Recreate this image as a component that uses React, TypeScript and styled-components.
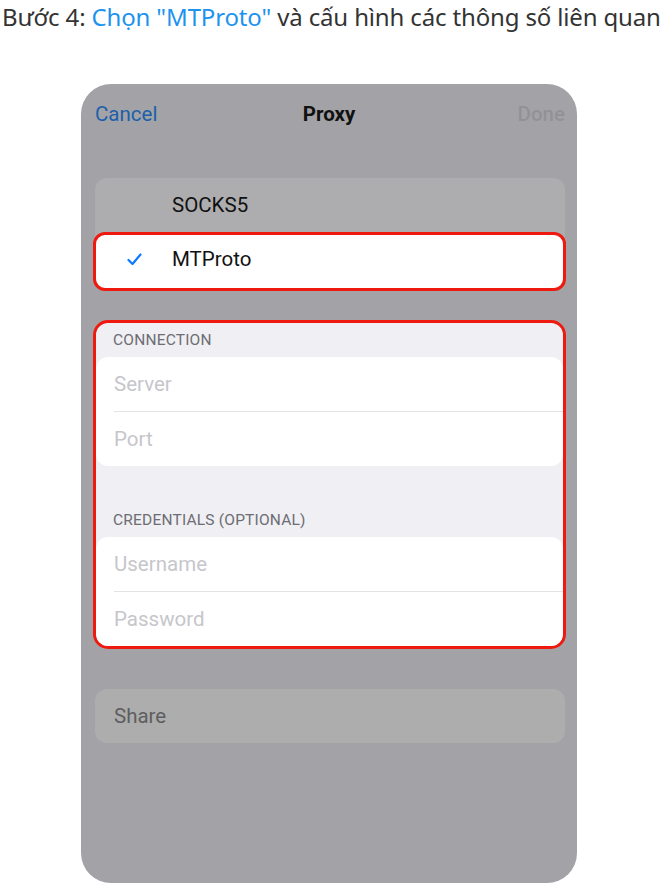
import styled, { createGlobalStyle } from "styled-components";

const GlobalStyle = createGlobalStyle`
  html, body {
    margin: 0;
    padding: 0;
    background: #ffffff;
  }
  * {
    box-sizing: border-box;
  }
`;

const Page = styled.div`
  width: 664px;
  height: 886px;
  overflow: hidden;
  background: #fff;
`;

const Title = styled.h1`
  margin: 0;
  padding: 1px 0 0 2px;
  height: 30px;
  line-height: 32px;
  font-family: "Noto Sans", "Open Sans", sans-serif;
  font-weight: 400;
  font-size: 24px;
  letter-spacing: -0.15px;
  color: #333;
  white-space: nowrap;
`;

const Accent = styled.span`
  color: #1d93ee;
`;

const Phone = styled.div`
  margin: 54px 0 0 81px;
  width: 496px;
  height: 799px;
  border-radius: 30px;
  background: #a3a3a7;
  font-family: Roboto, "Liberation Sans", sans-serif;
  display: flex;
  flex-direction: column;
`;

const NavBar = styled.div`
  height: 60px;
  padding: 0 12px 0 14px;
  display: flex;
  align-items: center;
  justify-content: space-between;
  font-size: 20.5px;
`;

const NavButton = styled.span<{ $dim?: boolean }>`
  width: 80px;
  color: ${(p) => (p.$dim ? "#929296" : "#1b60a9")};
  font-weight: ${(p) => (p.$dim ? 500 : 400)};
  text-align: ${(p) => (p.$dim ? "right" : "left")};
`;

const NavTitle = styled.span`
  color: #111;
  font-weight: 700;
  font-size: 20.5px;
  margin-left: -2px;
`;

const ProtocolGroup = styled.div`
  margin: 34px 12px 0 14px;
  border-radius: 12px;
  background: #adadaf;
`;

const ProtocolRow = styled.div<{ $selected?: boolean }>`
  display: flex;
  align-items: center;
  height: ${(p) => (p.$selected ? "59px" : "54px")};
  margin: ${(p) => (p.$selected ? "0 -1px 0 -2px" : "0")};
  border: ${(p) => (p.$selected ? "3px solid #ee1a10" : "none")};
  border-radius: 12px;
  background: ${(p) => (p.$selected ? "#fff" : "transparent")};
  padding: ${(p) => (p.$selected ? "0 0 5px 0" : "0 0 0 1px")};
  font-size: 20.5px;
  color: #111;
`;

const CheckCell = styled.span`
  width: 76px;
  display: flex;
  align-items: center;
  padding-left: 31px;
  flex-shrink: 0;
`;

const Highlight = styled.div`
  margin: 29px 11px 0 12px;
  border: 3px solid #ee1a10;
  border-radius: 15px;
  background: #efeff4;
  overflow: hidden;
`;

const SectionHeader = styled.div<{ $height: number }>`
  height: ${(p) => p.$height}px;
  display: flex;
  align-items: flex-end;
  padding: 0 0 8px 17px;
  font-size: 15.5px;
  letter-spacing: 0.2px;
  color: #6d6d72;
  text-transform: uppercase;
`;

const FieldGroup = styled.div`
  background: #fff;
  border-radius: 12px;
`;

const Field = styled.div<{ $last?: boolean }>`
  margin-left: 18px;
  height: ${(p) => (p.$last ? "54px" : "55px")};
  display: flex;
  align-items: center;
  border-bottom: ${(p) => (p.$last ? "none" : "1px solid #e3e3e6")};
  font-size: 20.5px;
  color: #c6c6cb;
`;

const ShareRow = styled.div`
  margin: 40px 12px 0 14px;
  height: 54px;
  border-radius: 12px;
  background: #adadad;
  display: flex;
  align-items: center;
  padding-left: 19px;
  font-size: 20.5px;
  color: #5e5e60;
`;

function Check() {
  return (
    <svg width="15" height="13" viewBox="0 0 15 13">
      <path
        d="M1.5 7 L5.5 11 L13.5 1.5"
        fill="none"
        stroke="#0a7aff"
        strokeWidth="2.2"
        strokeLinecap="round"
        strokeLinejoin="round"
      />
    </svg>
  );
}

export default function App() {
  return (
    <Page>
      <GlobalStyle />
      <Title>
        Bước 4: <Accent>Chọn "MTProto"</Accent> và cấu hình các thông số liên quan
      </Title>
      <Phone>
        <NavBar>
          <NavButton>Cancel</NavButton>
          <NavTitle>Proxy</NavTitle>
          <NavButton $dim>Done</NavButton>
        </NavBar>
        <ProtocolGroup>
          <ProtocolRow>
            <CheckCell />
            SOCKS5
          </ProtocolRow>
          <ProtocolRow $selected>
            <CheckCell>
              <Check />
            </CheckCell>
            MTProto
          </ProtocolRow>
        </ProtocolGroup>
        <Highlight>
          <SectionHeader $height={34}>Connection</SectionHeader>
          <FieldGroup>
            <Field>Server</Field>
            <Field $last>Port</Field>
          </FieldGroup>
          <SectionHeader $height={71}>Credentials (Optional)</SectionHeader>
          <FieldGroup>
            <Field>Username</Field>
            <Field $last>Password</Field>
          </FieldGroup>
        </Highlight>
        <ShareRow>Share</ShareRow>
      </Phone>
    </Page>
  );
}
